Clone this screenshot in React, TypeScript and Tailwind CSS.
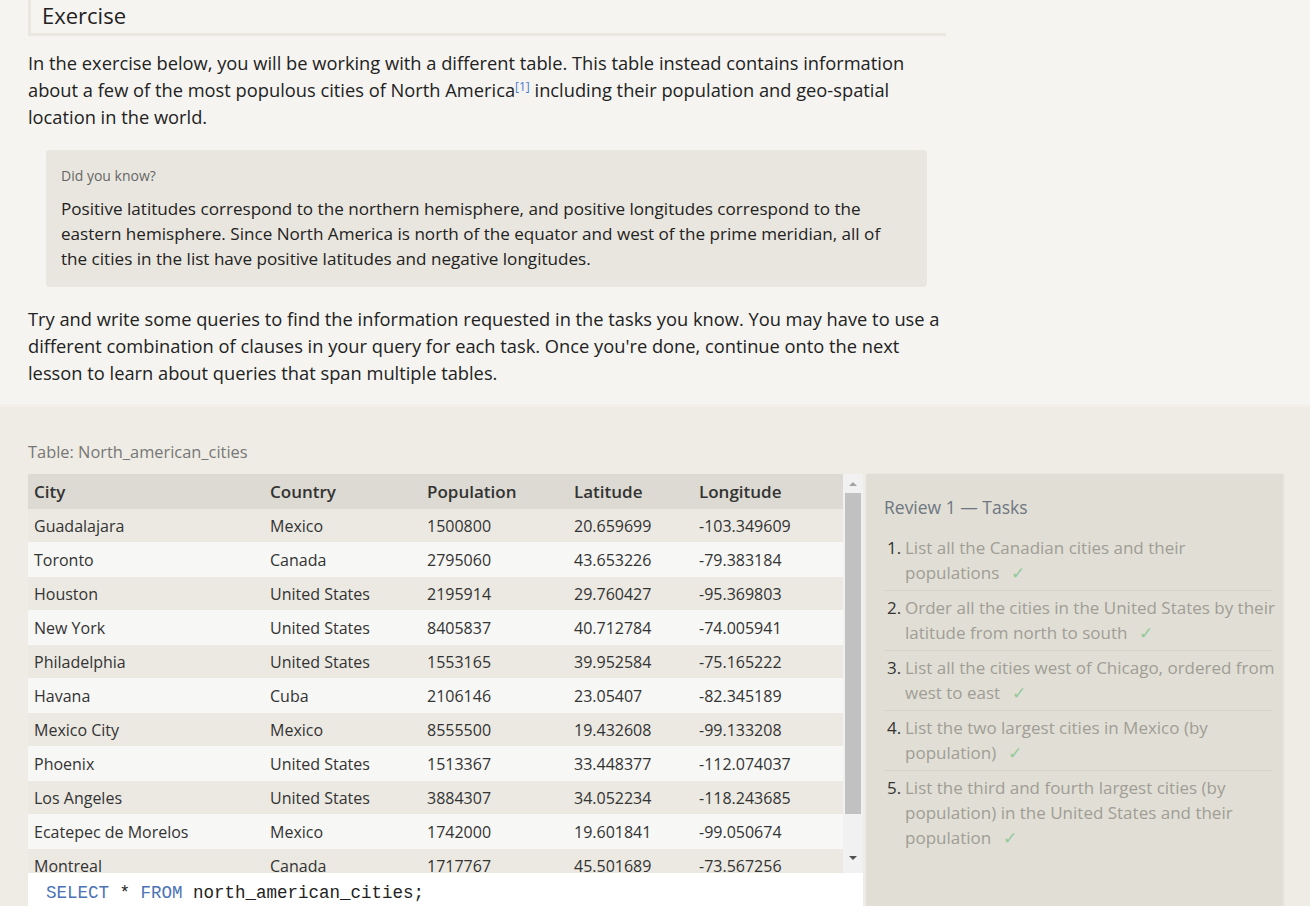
import React from 'react';

const rows = [
  ['Guadalajara', 'Mexico', '1500800', '20.659699', '-103.349609'],
  ['Toronto', 'Canada', '2795060', '43.653226', '-79.383184'],
  ['Houston', 'United States', '2195914', '29.760427', '-95.369803'],
  ['New York', 'United States', '8405837', '40.712784', '-74.005941'],
  ['Philadelphia', 'United States', '1553165', '39.952584', '-75.165222'],
  ['Havana', 'Cuba', '2106146', '23.05407', '-82.345189'],
  ['Mexico City', 'Mexico', '8555500', '19.432608', '-99.133208'],
  ['Phoenix', 'United States', '1513367', '33.448377', '-112.074037'],
  ['Los Angeles', 'United States', '3884307', '34.052234', '-118.243685'],
  ['Ecatepec de Morelos', 'Mexico', '1742000', '19.601841', '-99.050674'],
  ['Montreal', 'Canada', '1717767', '45.501689', '-73.567256'],
];

const tasks = [
  ['List all the Canadian cities and their', 'populations'],
  ['Order all the cities in the United States by their', 'latitude from north to south'],
  ['List all the cities west of Chicago, ordered from', 'west to east'],
  ['List the two largest cities in Mexico (by', 'population)'],
  ['List the third and fourth largest cities (by', 'population) in the United States and their', 'population'],
];

const cols = ['w-[236px]', 'w-[157px]', 'w-[147px]', 'w-[125px]', 'w-[150px]'];

export default function App() {
  return (
    <div className="h-[906px] bg-[#f5f4f0] font-['Open_Sans',sans-serif] text-[#222] overflow-hidden">
      {/* Lesson text */}
      <div className="w-[918px] ml-[28px]">
        <div className="border-l-[3px] border-b-[3px] border-[#e9e7e0] pl-[11px] h-[38px] -mt-[2px] flex items-center">
          <h2 className="text-[22px] text-[#222] leading-none -mt-[2px]">Exercise</h2>
        </div>
        <p className="mt-[13px] text-[18.3px] leading-[27px] text-[#222] whitespace-nowrap">
          In the exercise below, you will be working with a different table. This table instead contains information
          <br />
          about a few of the most populous cities of North America
          <sup className="text-[12px] text-[#4a7bd0]">[1]</sup> including their population and geo-spatial
          <br />
          location in the world.
        </p>
        <div className="mt-[20px] ml-[18px] w-[881px] bg-[#e9e6df] rounded-[4px] px-[15px] pt-[16px] pb-[16px]">
          <div className="text-[14px] text-[#666] leading-[20px]">Did you know?</div>
          <p className="mt-[10px] text-[17.1px] leading-[25px] text-[#222] whitespace-nowrap">
            Positive latitudes correspond to the northern hemisphere, and positive longitudes correspond to the
            <br />
            eastern hemisphere. Since North America is north of the equator and west of the prime meridian, all of
            <br />
            the cities in the list have positive latitudes and negative longitudes.
          </p>
        </div>
        <p className="mt-[18px] text-[18.3px] leading-[27px] text-[#222] whitespace-nowrap">
          Try and write some queries to find the information requested in the tasks you know. You may have to use a
          <br />
          different combination of clauses in your query for each task. Once you're done, continue onto the next
          <br />
          lesson to learn about queries that span multiple tables.
        </p>
      </div>

      {/* Exercise area */}
      <div className="mt-[20px] bg-[#eeece5] border-t border-[#f8efe8] shadow-[0_-1px_2px_rgba(0,0,0,0.03)] pt-[33px] pl-[28px] h-[600px]">
        <div className="text-[16.4px] text-[#777] leading-[24px]">Table: North_american_cities</div>
        <div className="mt-[10px] flex gap-[3px]">
          <div className="w-[835px] flex flex-col">
            <div className="h-[399px] flex overflow-hidden">
              <div className="w-[815px]">
                <div className="flex h-[35px] items-center bg-[#dcdad2] text-[17px] font-semibold text-[#333]">
                  {['City', 'Country', 'Population', 'Latitude', 'Longitude'].map((h, i) => (
                    <div key={h} className={`${cols[i]} pl-[6px]`}>{h}</div>
                  ))}
                </div>
                {rows.map((r, ri) => (
                  <div
                    key={r[0]}
                    className={`flex h-[34px] items-center border-b border-[#f8f8f6] text-[16px] text-[#333] ${ri % 2 === 0 ? 'bg-[#ebe9e2]' : 'bg-[#f7f7f5]'}`}
                  >
                    {r.map((c, i) => (
                      <div key={i} className={`${cols[i]} pl-[6px] whitespace-nowrap`}>{c}</div>
                    ))}
                  </div>
                ))}
              </div>
              {/* scrollbar */}
              <div className="w-[20px] h-full bg-[#f1f1f1] flex flex-col items-center">
                <div className="h-[19px] flex items-center justify-center">
                  <div className="w-0 h-0 border-l-[4px] border-r-[4px] border-b-[4px] border-l-transparent border-r-transparent border-b-[#a3a3a3]" />
                </div>
                <div className="w-[16px] h-[321px] bg-[#c1c1c1]" />
                <div className="flex-1" />
                <div className="h-[19px] flex items-center justify-center mb-[6px]">
                  <div className="w-0 h-0 border-l-[4px] border-r-[4px] border-t-[4px] border-l-transparent border-r-transparent border-t-[#505050]" />
                </div>
              </div>
            </div>
            <div className="h-[40px] bg-white pl-[18px] pt-[8px] font-['Liberation_Mono',monospace] text-[17.5px] text-[#222] leading-[24px]">
              <span className="text-[#4b73b5]">SELECT</span> * <span className="text-[#4b73b5]">FROM</span> north_american_cities;
            </div>
          </div>

          {/* Tasks panel */}
          <div className="w-[417px] h-[480px] bg-[#e1dfd5] shadow-[1px_0_2px_rgba(0,0,0,0.05)] pl-[18px] pr-[11px] pt-[20px]">
            <div className="text-[17.5px] text-[#6f7682] leading-[26px]">Review 1 — Tasks</div>
            <ol className="mt-[15px]">
              {tasks.map((t, i) => (
                <li key={i} className={`flex text-[17px] leading-[25px] ${i < tasks.length - 1 ? 'border-b border-[#d6d4ca] pb-[5px] mb-[4px]' : ''}`}>
                  <span className="w-[21px] pl-[3px] text-[#333] shrink-0">{i + 1}.</span>
                  <span className="text-[#a09d96]">
                    {t.map((line, li) => (
                      <span key={li} className="block whitespace-nowrap">
                        {line}
                        {li === t.length - 1 && <span className="ml-[12px] text-[#93c99b]">✓</span>}
                      </span>
                    ))}
                  </span>
                </li>
              ))}
            </ol>
          </div>
        </div>
      </div>
    </div>
  );
}
